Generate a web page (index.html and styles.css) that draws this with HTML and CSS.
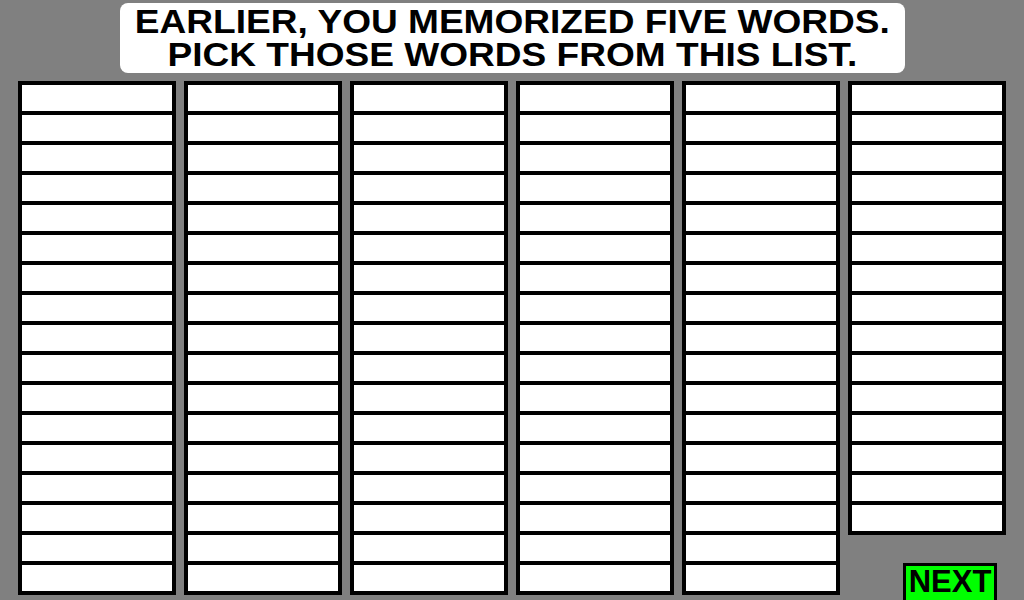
FILE: index.html
```html
<!DOCTYPE html>
<html>
<head>
<meta charset="utf-8">
<link rel="stylesheet" href="styles.css">
</head>
<body>
<div class="screen">
  <div class="header-wrap">
    <div class="header"><div class="title">EARLIER, YOU MEMORIZED FIVE WORDS.<br>PICK THOSE WORDS FROM THIS LIST.</div></div>
  </div>
  <div class="columns">
    <div class="col"><div class="cell"></div><div class="cell"></div><div class="cell"></div><div class="cell"></div><div class="cell"></div><div class="cell"></div><div class="cell"></div><div class="cell"></div><div class="cell"></div><div class="cell"></div><div class="cell"></div><div class="cell"></div><div class="cell"></div><div class="cell"></div><div class="cell"></div><div class="cell"></div><div class="cell"></div></div>
    <div class="col"><div class="cell"></div><div class="cell"></div><div class="cell"></div><div class="cell"></div><div class="cell"></div><div class="cell"></div><div class="cell"></div><div class="cell"></div><div class="cell"></div><div class="cell"></div><div class="cell"></div><div class="cell"></div><div class="cell"></div><div class="cell"></div><div class="cell"></div><div class="cell"></div><div class="cell"></div></div>
    <div class="col"><div class="cell"></div><div class="cell"></div><div class="cell"></div><div class="cell"></div><div class="cell"></div><div class="cell"></div><div class="cell"></div><div class="cell"></div><div class="cell"></div><div class="cell"></div><div class="cell"></div><div class="cell"></div><div class="cell"></div><div class="cell"></div><div class="cell"></div><div class="cell"></div><div class="cell"></div></div>
    <div class="col"><div class="cell"></div><div class="cell"></div><div class="cell"></div><div class="cell"></div><div class="cell"></div><div class="cell"></div><div class="cell"></div><div class="cell"></div><div class="cell"></div><div class="cell"></div><div class="cell"></div><div class="cell"></div><div class="cell"></div><div class="cell"></div><div class="cell"></div><div class="cell"></div><div class="cell"></div></div>
    <div class="col"><div class="cell"></div><div class="cell"></div><div class="cell"></div><div class="cell"></div><div class="cell"></div><div class="cell"></div><div class="cell"></div><div class="cell"></div><div class="cell"></div><div class="cell"></div><div class="cell"></div><div class="cell"></div><div class="cell"></div><div class="cell"></div><div class="cell"></div><div class="cell"></div><div class="cell"></div></div>
    <div class="last">
      <div class="col"><div class="cell"></div><div class="cell"></div><div class="cell"></div><div class="cell"></div><div class="cell"></div><div class="cell"></div><div class="cell"></div><div class="cell"></div><div class="cell"></div><div class="cell"></div><div class="cell"></div><div class="cell"></div><div class="cell"></div><div class="cell"></div><div class="cell"></div></div>
      <div class="next">NEXT</div>
    </div>
  </div>
</div>
</body>
</html>
```
FILE: styles.css
```css
html, body {
  margin: 0;
  padding: 0;
}
body {
  background: #808080;
  font-family: "Liberation Sans", Arial, sans-serif;
}
.screen {
  width: 1024px;
  height: 600px;
  overflow: hidden;
  background: #808080;
}
.header-wrap {
  display: flex;
  justify-content: center;
  padding-top: 3px;
}
.header {
  width: 785px;
  height: 70px;
  box-sizing: border-box;
  padding-top: 2px;
  background: #fff;
  border-radius: 8px;
  display: flex;
  justify-content: center;
}
.title {
  white-space: nowrap;
  text-align: center;
  font-weight: bold;
  font-size: 34px;
  line-height: 33px;
  color: #000;
  transform: scaleX(1.09);
  transform-origin: center top;
}
.columns {
  display: flex;
  align-items: flex-start;
  gap: 8px;
  padding-left: 18px;
  margin-top: 8px;
}
.col {
  width: 158px;
  box-sizing: border-box;
  background: #000;
  padding: 4px;
  display: flex;
  flex-direction: column;
  gap: 4px;
}
.cell {
  height: 26px;
  background: #fff;
}
.last {
  display: flex;
  flex-direction: column;
}
.next {
  margin-top: 28px;
  margin-left: 55px;
  width: 94px;
  height: 42px;
  box-sizing: border-box;
  border: 3px solid #000;
  background: #00ff00;
  color: #000;
  font-weight: bold;
  font-size: 31px;
  line-height: 32px;
  text-align: center;
}
```
